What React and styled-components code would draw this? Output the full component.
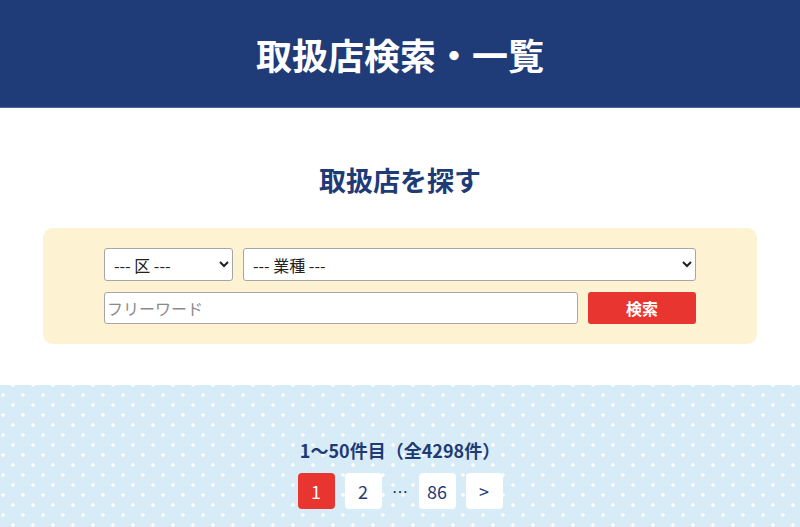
import React from "react";
import styled, { createGlobalStyle } from "styled-components";

const Global = createGlobalStyle`
  html, body { margin: 0; padding: 0; background: #fff; }
  body { font-family: "Noto Sans CJK JP", "Noto Sans", sans-serif; color: #1f3b75; }
  * { box-sizing: border-box; }
`;

const Header = styled.header`
  height: 107px;
  background: #1f3c78;
  display: flex;
  align-items: center;
  justify-content: center;
  box-shadow: 0 1px 0 #4b6697;
`;

const PageTitle = styled.h1`
  margin: 0;
  color: #fff;
  font-size: 36px;
  font-weight: 700;
  letter-spacing: 0;
  line-height: 1;
`;

const SearchSection = styled.section`
  padding: 55px 43px 41px;
  display: flex;
  flex-direction: column;
  align-items: center;
`;

const SectionTitle = styled.h2`
  margin: 0 0 30px;
  font-size: 27px;
  font-weight: 700;
  line-height: 36px;
  color: #1f3b75;
`;

const FormBox = styled.form`
  width: 714px;
  background: #fdf2d1;
  border-radius: 10px;
  padding: 20px 61px;
  display: flex;
  flex-direction: column;
  gap: 11px;
`;

const Row = styled.div`
  display: flex;
  gap: 10px;
`;

const Select = styled.select`
  height: 33px;
  width: ${(p) => p.$w}px;
  flex: ${(p) => (p.$grow ? 1 : "none")};
  font-family: "Noto Sans CJK JP", sans-serif;
  font-size: 16px;
  color: #222;
  border: 1px solid #a6a6a6;
  border-radius: 3px;
  background: #fff;
  padding: 0 5px;
`;

const Input = styled.input`
  flex: 1;
  height: 32px;
  font-family: "Noto Sans CJK JP", sans-serif;
  font-size: 16px;
  border: 1px solid #a6a6a6;
  border-radius: 3px;
  background: #fff;
  padding: 0 2px;
  &::placeholder { color: #8a8a8a; }
`;

const SearchButton = styled.button`
  width: 108px;
  height: 32px;
  border: none;
  border-radius: 3px;
  background: #e8352f;
  color: #fff;
  font-family: "Noto Sans CJK JP", sans-serif;
  font-size: 16px;
  font-weight: 700;
`;

const ResultSection = styled.section`
  min-height: 142px;
  background-color: #d8ecf8;
  background-image:
    radial-gradient(circle, #ffffff 1.4px, transparent 2px),
    radial-gradient(circle, #ffffff 1.4px, transparent 2px);
  background-size: 20px 20px;
  background-position: -7px 0, 3px -10px;
  padding: 52px 0 20px;
  display: flex;
  flex-direction: column;
  align-items: center;
  gap: 10px;
`;

const Count = styled.p`
  margin: 0;
  font-size: 18px;
  font-weight: 700;
  line-height: 26px;
  color: #1f3b75;
`;

const Pager = styled.nav`
  display: flex;
  align-items: center;
  gap: 10px;
`;

const PageBtn = styled.span`
  width: 37px;
  height: 36px;
  border-radius: 4px;
  display: flex;
  align-items: center;
  justify-content: center;
  font-family: "Noto Sans CJK JP", sans-serif;
  font-size: 18px;
  background: ${(p) => (p.$active ? "#e8352f" : "#fff")};
  color: ${(p) => (p.$active ? "#fff" : "#1f3b75")};
`;

const Ellipsis = styled.span`
  width: 17px;
  text-align: center;
  font-size: 16px;
  color: #1f3b75;
`;

export default function App() {
  return (
    <>
      <Global />
      <Header>
        <PageTitle>取扱店検索・一覧</PageTitle>
      </Header>
      <SearchSection>
        <SectionTitle>取扱店を探す</SectionTitle>
        <FormBox onSubmit={(e) => e.preventDefault()}>
          <Row>
            <Select $w={129} defaultValue="">
              <option value="">--- 区 ---</option>
            </Select>
            <Select $grow defaultValue="">
              <option value="">--- 業種 ---</option>
            </Select>
          </Row>
          <Row>
            <Input placeholder="フリーワード" />
            <SearchButton type="submit">検索</SearchButton>
          </Row>
        </FormBox>
      </SearchSection>
      <ResultSection>
        <Count>1〜50件目（全4298件）</Count>
        <Pager>
          <PageBtn $active>1</PageBtn>
          <PageBtn>2</PageBtn>
          <Ellipsis>…</Ellipsis>
          <PageBtn>86</PageBtn>
          <PageBtn>&gt;</PageBtn>
        </Pager>
      </ResultSection>
    </>
  );
}
